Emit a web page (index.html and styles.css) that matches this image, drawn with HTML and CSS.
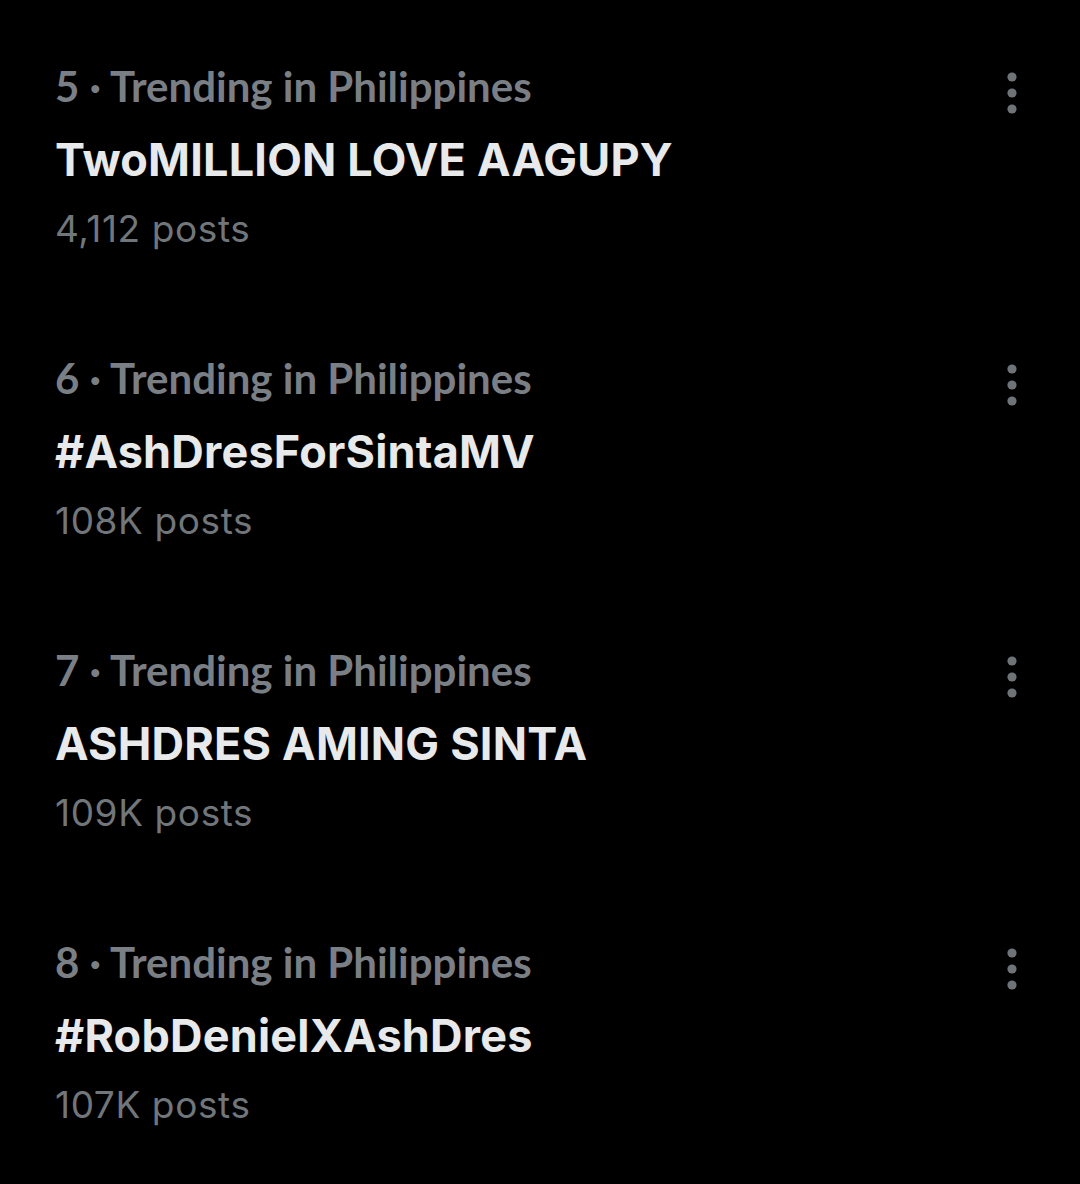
FILE: index.html
```html
<!DOCTYPE html>
<html lang="en">
<head>
    <meta charset="UTF-8">
    <meta name="viewport" content="width=device-width, initial-scale=1.0">
    <title>Trending</title>
    <link rel="stylesheet" href="styles.css">
</head>
<body>
    <div class="trends">
        <div class="trend">
            <div class="trend-text">
                <div class="trend-meta">5 · Trending in Philippines</div>
                <div class="trend-name">TwoMILLION LOVE AAGUPY</div>
                <div class="trend-count">4,112 posts</div>
            </div>
            <button class="more" aria-label="More">
                <svg width="20" height="44" viewBox="0 0 20 44"><circle cx="10" cy="6" r="4.6"/><circle cx="10" cy="22" r="4.6"/><circle cx="10" cy="38" r="4.6"/></svg>
            </button>
        </div>

        <div class="trend">
            <div class="trend-text">
                <div class="trend-meta">6 · Trending in Philippines</div>
                <div class="trend-name">#AshDresForSintaMV</div>
                <div class="trend-count">108K posts</div>
            </div>
            <button class="more" aria-label="More">
                <svg width="20" height="44" viewBox="0 0 20 44"><circle cx="10" cy="6" r="4.6"/><circle cx="10" cy="22" r="4.6"/><circle cx="10" cy="38" r="4.6"/></svg>
            </button>
        </div>

        <div class="trend">
            <div class="trend-text">
                <div class="trend-meta">7 · Trending in Philippines</div>
                <div class="trend-name">ASHDRES AMING SINTA</div>
                <div class="trend-count">109K posts</div>
            </div>
            <button class="more" aria-label="More">
                <svg width="20" height="44" viewBox="0 0 20 44"><circle cx="10" cy="6" r="4.6"/><circle cx="10" cy="22" r="4.6"/><circle cx="10" cy="38" r="4.6"/></svg>
            </button>
        </div>

        <div class="trend">
            <div class="trend-text">
                <div class="trend-meta">8 · Trending in Philippines</div>
                <div class="trend-name">#RobDenielXAshDres</div>
                <div class="trend-count">107K posts</div>
            </div>
            <button class="more" aria-label="More">
                <svg width="20" height="44" viewBox="0 0 20 44"><circle cx="10" cy="6" r="4.6"/><circle cx="10" cy="22" r="4.6"/><circle cx="10" cy="38" r="4.6"/></svg>
            </button>
        </div>
    </div>
</body>
</html>
```

FILE: styles.css
```css
html, body {
    margin: 0;
    background-color: #000;
}
body {
    font-family: Inter, "Noto Sans", sans-serif;
    height: 1184px;
    overflow: hidden;
}
.trends {
    padding-top: 62px;
}
.trend {
    display: flex;
    justify-content: space-between;
    align-items: flex-start;
    height: 292px;
    padding: 0 58px 0 55px;
    box-sizing: border-box;
}
.trend-meta {
    font-family: Lato, "Open Sans", sans-serif;
    font-weight: 700;
    font-size: 42px;
    line-height: 48px;
    color: #7a7f85;
}
.trend-name {
    margin-top: 26px;
    font-weight: 700;
    font-size: 45px;
    line-height: 48px;
    letter-spacing: 0.2px;
    color: #e7e9ea;
}
.trend-count {
    margin-top: 21px;
    font-size: 37px;
    line-height: 48px;
    letter-spacing: 0.6px;
    color: #71767b;
}
.more {
    background: none;
    border: none;
    padding: 0;
    margin-top: 9px;
    cursor: pointer;
}
.more svg {
    display: block;
    fill: #6e7378;
}
```
